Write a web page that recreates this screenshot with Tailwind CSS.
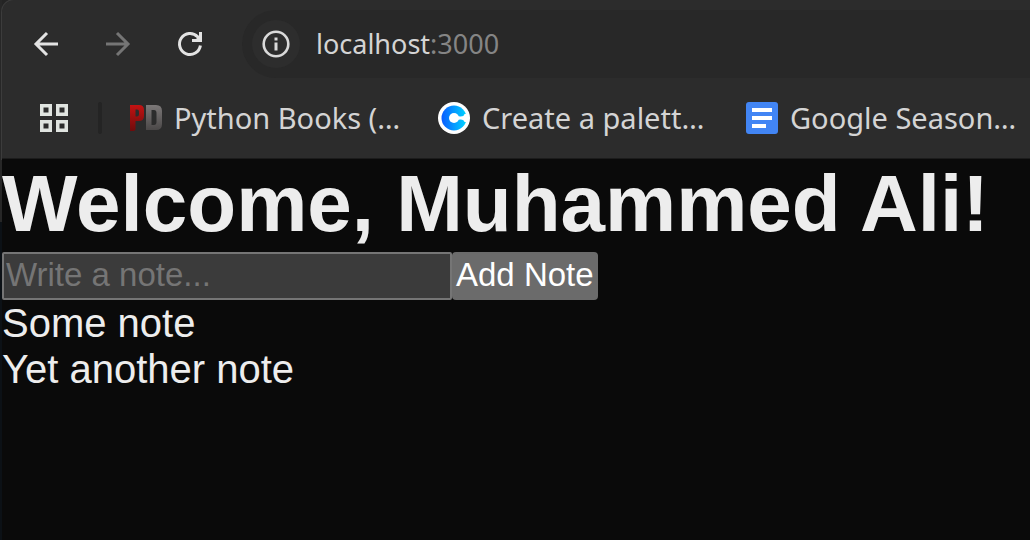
<!doctype html>
<html lang="en">
<head>
  <meta charset="UTF-8">
  <meta name="viewport" content="width=device-width, initial-scale=1.0">
  <title>Notes</title>
  <script src="https://cdn.jsdelivr.net/npm/@tailwindcss/browser@4"></script>
</head>
<body class="bg-[#0a0a0a]">
  <div class="flex min-h-screen overflow-hidden">
    <!-- edge of the window behind -->
    <div class="flex w-0.5 shrink-0 flex-col bg-[#0c1116]">
      <div class="h-[222px] bg-[#272727]"></div>
    </div>

    <div class="flex min-w-0 grow flex-col bg-[#242424]">
      <header class="overflow-hidden rounded-tl-xl border-b border-[#1c1c1c] bg-[#2c2c2c] font-['Noto_Sans',sans-serif] text-[29px] text-[#d4d4d4] shadow-[0_0_0_1px_#3c3c3c]">
        <!-- Toolbar -->
        <div class="flex items-center pt-2.5 pl-6">
          <button type="button" aria-label="Back" class="flex size-10 items-center justify-center">
            <svg class="size-8" viewBox="0 0 32 32" fill="none" stroke="#e3e3e3" stroke-width="3"><path d="M28 16H7M17 5L6 16l11 11"/></svg>
          </button>
          <button type="button" aria-label="Forward" class="ml-8 flex size-10 items-center justify-center">
            <svg class="size-8" viewBox="0 0 32 32" fill="none" stroke="#757575" stroke-width="3"><path d="M4 16h21M15 5l11 11-11 11"/></svg>
          </button>
          <button type="button" aria-label="Reload" class="ml-8 flex size-10 items-center justify-center">
            <svg class="size-8" viewBox="0 0 32 32" fill="none" stroke="#e3e3e3" stroke-width="3"><path d="M26.400 17.500A10.500 10.500 0 1 1 23.500 8.600L26 11.500"/><path d="M18 12.500H26.500V4"/><path d="M20.500 12.500l6-6v6z" fill="#e3e3e3" stroke="none"/></svg>
          </button>
          <div class="ml-8 flex h-[68px] grow items-center rounded-l-full bg-[#282828] pl-2.5">
            <button type="button" aria-label="View site information" class="flex size-12 items-center justify-center rounded-full bg-[#2d2d2d]">
              <svg class="size-7" viewBox="0 0 28 28" fill="none" stroke="#dadada"><circle cx="14" cy="14" r="12.300" stroke-width="2.600"/><path d="M14 12.500v8M14 7.500v3" stroke-width="3"/></svg>
            </button>
            <div role="textbox" contenteditable="true" aria-label="Address" class="ml-4 grow text-[27px] whitespace-nowrap">localhost<span class="text-[#858585]">:3000</span></div>
          </div>
        </div>

        <!-- Bookmarks bar -->
        <nav class="flex h-20 items-center pl-9">
          <button type="button" aria-label="Apps" class="shrink-0">
            <svg class="size-8" viewBox="0 0 32 32" fill="none" stroke="#e0e4e0" stroke-width="3.500"><path d="M3.750 3.750h8.500v8.500h-8.500zM19.750 3.750h8.500v8.500h-8.500zM3.750 19.750h8.500v8.500h-8.500zM19.750 19.750h8.500v8.500h-8.500z"/></svg>
          </button>
          <div class="ml-7 h-8 w-1 shrink-0 rounded bg-[#242424]"></div>
          <a href="#" class="ml-7 flex w-[308px] shrink-0 items-center gap-3">
            <svg class="size-8 shrink-0" viewBox="0 0 32 32">
              <defs>
                <linearGradient id="red" x1="0" y1="0" x2="0" y2="1"><stop offset="0" stop-color="#c41212"/><stop offset="1" stop-color="#6e0c0c"/></linearGradient>
                <linearGradient id="grey" x1="0" y1="0" x2="0" y2="1"><stop offset="0" stop-color="#7c7878"/><stop offset="1" stop-color="#4b4848"/></linearGradient>
              </defs>
              <path fill="url(#red)" fill-rule="evenodd" d="M0 3h9q5 0 5 5v6q0 5-5 5H5.500v8q0 2-3 2H0zM5.500 7.500v7H7q2 0 2-2v-3q0-2-2-2z"/>
              <path fill="url(#grey)" fill-rule="evenodd" d="M16 3h10q6 0 6 6v13q0 6-6 6H16zM21.500 8v15H24q2.500 0 2.500-3v-9q0-3-2.500-3z"/>
            </svg>
            <span class="whitespace-nowrap">Python Books (…</span>
          </a>
          <a href="#" class="flex w-[308px] shrink-0 items-center gap-3">
            <svg class="size-8 shrink-0" viewBox="0 0 32 32">
              <defs><linearGradient id="blue" x1="0" y1="0" x2="1" y2="0"><stop offset="0" stop-color="#0a5cff"/><stop offset="1" stop-color="#00d5ff"/></linearGradient></defs>
              <circle cx="16" cy="16" r="16" fill="#fff"/>
              <circle cx="16" cy="16" r="12.500" fill="url(#blue)"/>
              <circle cx="16" cy="16" r="5" fill="#fff"/>
              <path d="M18 13.500q2 1 4.500 1 3.500 0 4-2.500H30v8h-3.500q-.5-2.500-4-2.500-2.500 0-4.500 1z" fill="#fff"/>
            </svg>
            <span class="whitespace-nowrap">Create a palett…</span>
          </a>
          <a href="#" class="flex shrink-0 items-center gap-3">
            <svg class="size-8 shrink-0" viewBox="0 0 32 32"><rect width="32" height="32" rx="3" fill="#4285f4"/><path fill="#fff" d="M6 6h20v4H6zM6 14h20v4H6zM6 22h14v4H6z"/></svg>
            <span class="whitespace-nowrap">Google Season…</span>
          </a>
        </nav>
      </header>

      <main class="grow bg-[#0a0a0a] pt-px font-['Liberation_Sans',Arial,sans-serif] text-[40px] leading-[46px] text-[#ededed]">
        <h1 class="mb-1 text-[80px] leading-[88px] font-bold whitespace-nowrap">Welcome, Muhammed Ali!</h1>
        <form class="flex h-12 text-[33px] leading-[44px]" onsubmit="return false">
          <input type="text" aria-label="Note" placeholder="Write a note..." class="w-[450px] rounded-xs border-2 border-[#757575] bg-[#3b3b3b] px-0.5 pb-0.5 placeholder:text-[#757575]">
          <button type="submit" class="rounded bg-[#6b6b6b] px-1 pb-0.5 whitespace-nowrap text-white">Add Note</button>
        </form>
        <ul>
          <li>Some note</li>
          <li>Yet another note</li>
        </ul>
      </main>
    </div>
  </div>
</body>
</html>
